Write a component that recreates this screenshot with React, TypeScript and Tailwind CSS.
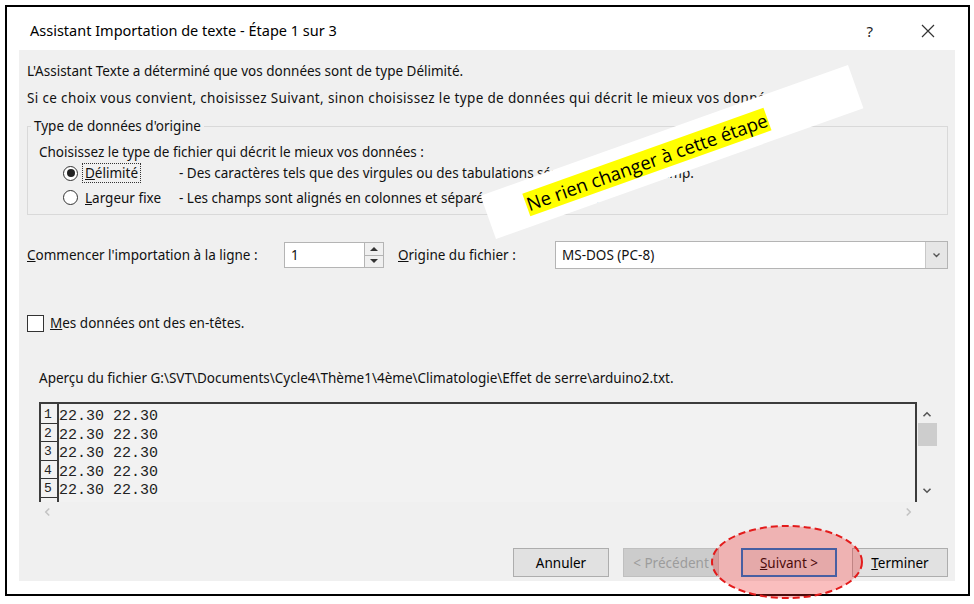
import type { ReactNode } from "react";

function Radio({ checked }: { checked?: boolean }) {
  return (
    <span className="w-[15px] h-[15px] rounded-full border border-[#333] bg-white flex items-center justify-center shrink-0">
      {checked && <span className="w-[8px] h-[8px] rounded-full bg-[#222]" />}
    </span>
  );
}

function Btn({ children, variant }: { children: ReactNode; variant?: "default" | "disabled" | "focus" }) {
  const base = "w-[96px] h-[29px] flex items-center justify-center text-[13.5px]";
  if (variant === "disabled")
    return <div className={`${base} bg-[#cccccc] border border-[#bfbfbf] text-[#9c9c9c]`}>{children}</div>;
  if (variant === "focus")
    return <div className={`${base} bg-[#e1e1e1] border-2 border-[#0078d7] text-black`}>{children}</div>;
  return <div className={`${base} bg-[#e1e1e1] border border-[#adadad] text-black`}>{children}</div>;
}

function Chevron({ dir, className }: { dir: "up" | "down" | "left" | "right"; className?: string }) {
  const d = {
    up: "M1 6 L5 2 L9 6",
    down: "M1 2 L5 6 L9 2",
    left: "M6 1 L2 5 L6 9",
    right: "M2 1 L6 5 L2 9",
  }[dir];
  const box = dir === "up" || dir === "down" ? "0 0 10 8" : "0 0 8 10";
  return (
    <svg viewBox={box} className={className} fill="none" stroke="currentColor" strokeWidth="1.8">
      <path d={d} />
    </svg>
  );
}

const rows = [1, 2, 3, 4, 5];

export default function App() {
  return (
    <div className="w-[974px] h-[604px] bg-white pt-[5px] pl-[5px] relative overflow-hidden font-['Noto_Sans',sans-serif] text-[13.5px] text-[#111]">
      <div className="w-[965px] h-[591px] border-2 border-black flex flex-col">
        {/* title bar */}
        <div className="h-[43px] flex items-center pt-[5px] pl-[23px] pr-[33px]">
          <span className="text-[14.5px] text-black">Assistant Importation de texte - Étape 1 sur 3</span>
          <span className="ml-auto text-[15px] text-[#222]">?</span>
          <svg viewBox="0 0 14 14" className="w-[14px] h-[14px] ml-[48px] text-[#333]" stroke="currentColor" strokeWidth="1.2">
            <path d="M1 1 L13 13 M13 1 L1 13" />
          </svg>
        </div>

        {/* content */}
        <div className="ml-[12px] w-[936px] h-[531px] bg-[#f0f0f0] flex flex-col leading-[18px]">
          <div className="pl-[8px] pt-[12px]">L'Assistant Texte a déterminé que vos données sont de type Délimité.</div>
          <div className="pl-[8px] mt-[9px] whitespace-nowrap tracking-[0.35px]">
            Si ce choix vous convient, choisissez Suivant, sinon choisissez le type de données qui décrit le mieux vos données.
          </div>

          <fieldset className="ml-[8px] mt-[10px] w-[921px] border border-[#d9d9d9] pb-[4px]">
            <legend className="ml-[3px] px-[3px]">Type de données d'origine</legend>
            <div className="pl-[11px]">
              <div className="mt-[8px]">Choisissez le type de fichier qui décrit le mieux vos données :</div>
              <div className="h-[24px] flex items-center">
                <span className="ml-[24px]"><Radio checked /></span>
                <span className="ml-[5px] w-[96px]">
                  <span className="outline outline-1 outline-dotted outline-[#333] px-[2px]"><u>D</u>élimité</span>
                </span>
                <span>- Des caractères tels que des virgules ou des tabulations séparent chaque champ.</span>
              </div>
              <div className="h-[25px] flex items-center">
                <span className="ml-[24px]"><Radio /></span>
                <span className="ml-[7px] w-[94px]"><u>L</u>argeur fixe</span>
                <span>- Les champs sont alignés en colonnes et séparés par des espaces.</span>
              </div>
            </div>
          </fieldset>

          {/* import row */}
          <div className="mt-[26px] h-[28px] flex items-center pl-[8px]">
            <span className="w-[257px]"><u>C</u>ommencer l'importation à la ligne :</span>
            <div className="w-[100px] h-[26px] bg-white border border-[#b4b4b4] flex">
              <span className="flex-1 pl-[6px] flex items-center">1</span>
              <div className="w-[19px] flex flex-col border-l border-[#b4b4b4]">
                <div className="flex-1 flex items-center justify-center bg-[#f0f0f0] border-b border-[#b4b4b4]">
                  <svg viewBox="0 0 8 4" className="w-[8px] h-[4px]"><path d="M0 4 L4 0 L8 4 Z" fill="#333" /></svg>
                </div>
                <div className="flex-1 flex items-center justify-center bg-[#f0f0f0]">
                  <svg viewBox="0 0 8 4" className="w-[8px] h-[4px]"><path d="M0 0 L4 4 L8 0 Z" fill="#333" /></svg>
                </div>
              </div>
            </div>
            <span className="ml-[14px] w-[157px]"><u>O</u>rigine du fichier :</span>
            <div className="w-[393px] h-[28px] bg-white border border-[#b4b4b4] flex">
              <span className="flex-1 pl-[6px] flex items-center">MS-DOS (PC-8)</span>
              <div className="w-[22px] bg-[#e6e6e6] border-l border-[#c8c8c8] flex items-center justify-center text-[#555]">
                <Chevron dir="down" className="w-[9px] h-[6px]" />
              </div>
            </div>
          </div>

          {/* checkbox */}
          <div className="mt-[44px] h-[20px] flex items-center pl-[8px]">
            <span className="w-[17px] h-[17px] bg-white border border-[#333]" />
            <span className="ml-[6px]"><u>M</u>es données ont des en-têtes.</span>
          </div>

          <div className="mt-[36px] pl-[20px]">
            Aperçu du fichier G:\SVT\Documents\Cycle4\Thème1\4ème\Climatologie\Effet de serre\arduino2.txt.
          </div>

          {/* preview */}
          <div className="mt-[15px] pl-[20px] flex">
            <div className="flex flex-col">
              <div className="w-[878px] h-[100px] border-t-2 border-l-2 border-r-2 border-[#3c3c3c] bg-[#f2f2f2] flex overflow-hidden">
                <div className="w-[18px] border-r-2 border-[#3c3c3c] flex flex-col pt-[1px]">
                  {rows.map((r) => (
                    <div key={r} className="h-[18.5px] border-b border-[#333] font-['Liberation_Mono',monospace] text-[13px] leading-[19px] pl-[3px] text-[#222]">
                      {r}
                    </div>
                  ))}
                </div>
                <div className="pt-[4px] font-['Liberation_Mono',monospace] text-[15px] leading-[18.5px] text-[#222]">
                  {rows.map((r) => (
                    <div key={r} className="whitespace-pre">22.30 22.30</div>
                  ))}
                </div>
              </div>
              <div className="h-[20px] flex items-center justify-between px-[5px] text-[#c4c4c4]">
                <Chevron dir="left" className="w-[7px] h-[10px]" />
                <Chevron dir="right" className="w-[7px] h-[10px]" />
              </div>
            </div>
            <div className="w-[20px] h-[100px] flex flex-col items-center text-[#555]">
              <Chevron dir="up" className="w-[10px] h-[7px] mt-[9px]" />
              <div className="w-[19px] h-[23px] bg-[#cdcdcd] mt-[5px]" />
              <Chevron dir="down" className="w-[10px] h-[7px] mt-auto mb-[8px]" />
            </div>
          </div>

          {/* buttons */}
          <div className="mt-[26px] flex justify-end pr-[7px]">
            <Btn>Annuler</Btn>
            <div className="ml-[14px]"><Btn variant="disabled">&lt; Précédent</Btn></div>
            <div className="ml-[22px]"><Btn variant="focus"><span><u>S</u>uivant &gt;</span></Btn></div>
            <div className="ml-[15px]"><Btn><span><u>T</u>erminer</span></Btn></div>
          </div>
        </div>
      </div>

      {/* red dashed ellipse annotation */}
      <svg className="absolute left-[710px] top-[524px] w-[154px] h-[76px]" viewBox="0 0 154 76">
        <ellipse cx="77" cy="38" rx="75" ry="36" fill="rgba(240,40,40,0.3)" stroke="#e31b1b" strokeWidth="2" strokeDasharray="7 4" />
      </svg>

      {/* rotated note */}
      <div className="absolute left-[477px] top-[129px] w-[390px] h-[46px] bg-white -rotate-[19.6deg] flex items-end pl-[40px] pb-[10px]">
        <span className="bg-[#ffff00] text-black text-[18.5px] leading-[24px] font-['Open_Sans',sans-serif] px-[1px]">
          Ne rien changer à cette étape
        </span>
      </div>
    </div>
  );
}
